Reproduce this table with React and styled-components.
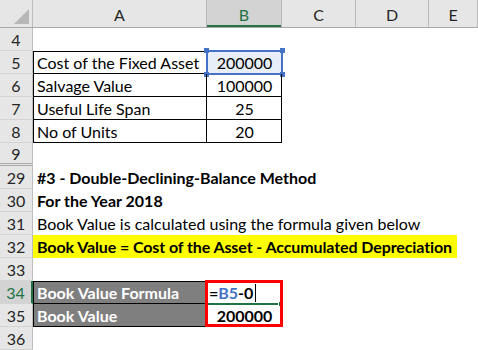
import React from "react";
import styled, { createGlobalStyle, css } from "styled-components";

const COLS = "33px 174px 75px 74px 73px 1fr";
const GREEN = "#217346";
const BLUE = "#4472c4";

const GlobalStyle = createGlobalStyle`
    html, body {
        margin: 0;
        padding: 0;
        background: #ffffff;
    }
`;

const Sheet = styled.div`
    width: 478px;
    height: 350px;
    overflow: hidden;
    background: #ffffff;
    font-family: Lato, "Open Sans", sans-serif;
    color: #000000;
`;

const HeaderRow = styled.div`
    display: grid;
    grid-template-columns: ${COLS};
    height: 28px;
    background: #e6e6e6;
    box-sizing: border-box;
    border-bottom: 1px solid #a9a9a9;
`;

const Corner = styled.div`
    position: relative;
    border-right: 1px solid #bdbdbd;
    &::after {
        content: "";
        position: absolute;
        right: 3px;
        bottom: 3px;
        width: 0;
        height: 0;
        border-left: 15px solid transparent;
        border-bottom: 15px solid #b7b7b7;
    }
`;

const ColHead = styled.div`
    display: flex;
    align-items: center;
    justify-content: center;
    padding-top: 2px;
    box-sizing: border-box;
    border-right: 1px solid #b9b9b9;
    font-size: 16px;
    color: #262626;
    ${p => p.$active && css`
        background: #d3d3d3;
        color: ${GREEN};
        box-shadow: inset 0 -2px 0 ${GREEN};
    `}
`;

const Row = styled.div`
    display: grid;
    grid-template-columns: ${COLS};
    height: 23px;
`;

const RowHead = styled.div`
    display: flex;
    align-items: center;
    justify-content: center;
    box-sizing: border-box;
    background: #e6e6e6;
    border-right: 1px solid #bdbdbd;
    border-bottom: 1px solid #d3d3d3;
    font-size: 16px;
    color: #262626;
    ${p => p.$gap && css`
        border-bottom: 3px double #a9a9a9;
    `}
    ${p => p.$active && css`
        background: #d3d3d3;
        color: ${GREEN};
        border-right: 2px solid ${GREEN};
    `}
`;

const Cell = styled.div`
    position: relative;
    display: flex;
    align-items: center;
    justify-content: ${p => (p.$center ? "center" : "flex-start")};
    padding: 0 ${p => (p.$tight ? "2px" : "4px")};
    box-sizing: border-box;
    font-size: 16px;
    white-space: nowrap;
    font-weight: ${p => (p.$bold ? 700 : 400)};
    background: ${p => p.$fill || "transparent"};
    color: ${p => p.$ink || "#000000"};
    box-shadow: ${p => [
        p.$box && "inset -1px -1px 0 #000",
        p.$top && "inset 0 1px 0 #000",
        p.$left && "inset 1px 0 0 #000",
    ].filter(Boolean).join(", ") || "none"};
    ${p => p.$span && css`grid-column: span ${p.$span};`}
`;

const Highlight = styled.span`
    display: flex;
    align-items: center;
    width: 424px;
    height: 100%;
    margin-left: -4px;
    padding-left: 4px;
    box-sizing: border-box;
    background: #ffff00;
    font-weight: 700;
    letter-spacing: -0.1px;
`;

const Selection = styled.div`
    position: absolute;
    left: -1px;
    top: -1px;
    right: -1px;
    bottom: -1px;
    border: 2px solid ${BLUE};
    pointer-events: none;
`;

const Handle = styled.span`
    position: absolute;
    width: 5px;
    height: 5px;
    background: ${BLUE};
    ${p => (p.$v === "t" ? "top: -4px;" : "bottom: -4px;")}
    ${p => (p.$h === "l" ? "left: -4px;" : "right: -4px;")}
`;

const RedBox = styled.div`
    position: absolute;
    left: -2px;
    top: -1px;
    width: 78px;
    height: 47px;
    box-sizing: border-box;
    border: 3px solid #ff0000;
    pointer-events: none;
    z-index: 2;
`;

const ActiveEdge = styled.div`
    position: absolute;
    left: 0;
    bottom: -1px;
    width: 71px;
    height: 2px;
    background: ${GREEN};
    &::after {
        content: "";
        position: absolute;
        right: -5px;
        top: -1px;
        width: 4px;
        height: 4px;
        background: ${GREEN};
    }
`;

const Ref = styled.span`
    color: ${BLUE};
`;

const Caret = styled.span`
    display: inline-block;
    width: 1px;
    height: 18px;
    margin-left: 2px;
    background: #000000;
`;

const tableRows = [
    { n: 5, label: "Cost of the Fixed Asset", value: "200000", selected: true },
    { n: 6, label: "Salvage Value", value: "100000" },
    { n: 7, label: "Useful Life Span", value: "25" },
    { n: 8, label: "No of Units", value: "20" },
];

const Empty = () => (
    <>
        <Cell />
        <Cell />
        <Cell />
        <Cell />
        <Cell />
    </>
);

export default function App() {
    return (
        <Sheet>
            <GlobalStyle />
            <HeaderRow>
                <Corner />
                <ColHead>A</ColHead>
                <ColHead $active>B</ColHead>
                <ColHead>C</ColHead>
                <ColHead>D</ColHead>
                <ColHead>E</ColHead>
            </HeaderRow>

            <Row>
                <RowHead>4</RowHead>
                <Empty />
            </Row>

            {tableRows.map((r, i) => (
                <Row key={r.n}>
                    <RowHead>{r.n}</RowHead>
                    <Cell $box $left $top={i === 0}>{r.label}</Cell>
                    <Cell $box $top={i === 0} $center $fill={r.selected ? "#e8eef8" : null}>
                        {r.value}
                        {r.selected && (
                            <Selection>
                                <Handle $v="t" $h="l" />
                                <Handle $v="t" $h="r" />
                                <Handle $v="b" $h="l" />
                                <Handle $v="b" $h="r" />
                            </Selection>
                        )}
                    </Cell>
                    <Cell />
                    <Cell />
                    <Cell />
                </Row>
            ))}

            <Row>
                <RowHead $gap>9</RowHead>
                <Empty />
            </Row>

            <Row>
                <RowHead>29</RowHead>
                <Cell $bold $span={5}>#3 - Double-Declining-Balance Method</Cell>
            </Row>
            <Row>
                <RowHead>30</RowHead>
                <Cell $bold $span={5}>For the Year 2018</Cell>
            </Row>
            <Row>
                <RowHead>31</RowHead>
                <Cell $span={5}>Book Value is calculated using the formula given below</Cell>
            </Row>
            <Row>
                <RowHead>32</RowHead>
                <Cell $span={5}>
                    <Highlight>Book Value = Cost of the Asset - Accumulated Depreciation</Highlight>
                </Cell>
            </Row>
            <Row>
                <RowHead>33</RowHead>
                <Empty />
            </Row>

            <Row>
                <RowHead $active>34</RowHead>
                <Cell $box $left $top $bold $fill="#7f7f7f" $ink="#ffffff">Book Value Formula</Cell>
                <Cell $bold $tight>
                    =<Ref>B5</Ref>-0<Caret />
                    <ActiveEdge />
                    <RedBox />
                </Cell>
                <Cell />
                <Cell />
                <Cell />
            </Row>
            <Row>
                <RowHead>35</RowHead>
                <Cell $box $left $bold $fill="#7f7f7f" $ink="#ffffff">Book Value</Cell>
                <Cell $bold $center>200000</Cell>
                <Cell />
                <Cell />
                <Cell />
            </Row>
            <Row>
                <RowHead>36</RowHead>
                <Empty />
            </Row>
        </Sheet>
    );
}
